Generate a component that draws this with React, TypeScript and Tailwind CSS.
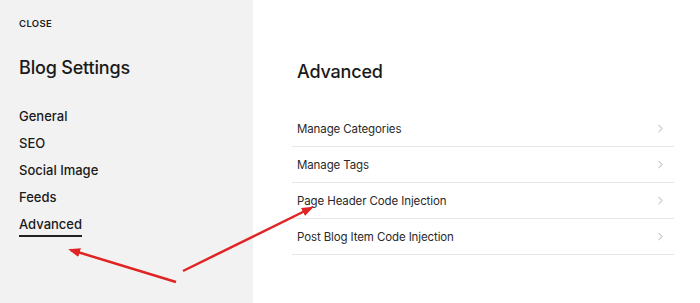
import React from 'react';
import { ChevronRight } from 'lucide-react';

const navItems = ['General', 'SEO', 'Social Image', 'Feeds', 'Advanced'];
const rows = ['Manage Categories', 'Manage Tags', 'Page Header Code Injection', 'Post Blog Item Code Injection'];

export default function App() {
  return (
    <div
      className="relative flex h-[303px] w-[700px] overflow-hidden bg-white text-[#1a1a1a]"
      style={{ fontFamily: 'Inter, "Noto Sans", sans-serif' }}
    >
      {/* sidebar */}
      <aside className="flex w-[253px] shrink-0 flex-col bg-[#f2f2f2] pl-[19px] pt-[18px]">
        <div className="text-[9.5px] font-semibold leading-[12px] tracking-[0.04em] text-[#222]">CLOSE</div>
        <h1 className="mt-[26px] text-[18px] font-medium leading-[24px] tracking-[-0.01em]">Blog Settings</h1>
        <nav className="mt-[22px] flex flex-col">
          {navItems.map((item) => (
            <div key={item} className="flex h-[27px] items-center">
              <span
                className={
                  item === 'Advanced'
                    ? 'relative text-[13px] font-medium leading-[16px] after:absolute after:left-0 after:right-0 after:top-[19px] after:h-[2px] after:bg-[#222]'
                    : 'text-[13px] font-medium leading-[16px]'
                }
              >
                {item}
              </span>
            </div>
          ))}
        </nav>
      </aside>

      {/* main panel */}
      <main className="flex flex-1 flex-col pl-[39px] pt-[60px]">
        <h2 className="pl-[5px] text-[18px] font-medium leading-[24px] tracking-[-0.01em]">Advanced</h2>
        <ul className="mt-[27px] w-[382px]">
          {rows.map((row) => (
            <li
              key={row}
              className="flex h-[36px] items-center justify-between border-b border-[#e6e6e6] pl-[5px] pr-[7px]"
            >
              <span className="text-[11.5px] leading-[16px] tracking-[-0.01em] text-[#2a2a2a]">{row}</span>
              <ChevronRight size={13} strokeWidth={1.5} className="text-[#9a9a9a]" />
            </li>
          ))}
        </ul>
      </main>

      {/* annotation arrows */}
      <svg className="pointer-events-none absolute inset-0" width="700" height="303" viewBox="0 0 700 303">
        <defs>
          <marker id="head" markerWidth="12" markerHeight="9" refX="9" refY="4.5" orient="auto" markerUnits="userSpaceOnUse">
            <path d="M0,0 L12,4.5 L0,9 Z" fill="#e02424" />
          </marker>
        </defs>
        <line x1="176" y1="282" x2="71" y2="250" stroke="#e02424" strokeWidth="2.5" markerEnd="url(#head)" />
        <line x1="183" y1="271" x2="311" y2="208" stroke="#e02424" strokeWidth="2.5" markerEnd="url(#head)" />
      </svg>
    </div>
  );
}
